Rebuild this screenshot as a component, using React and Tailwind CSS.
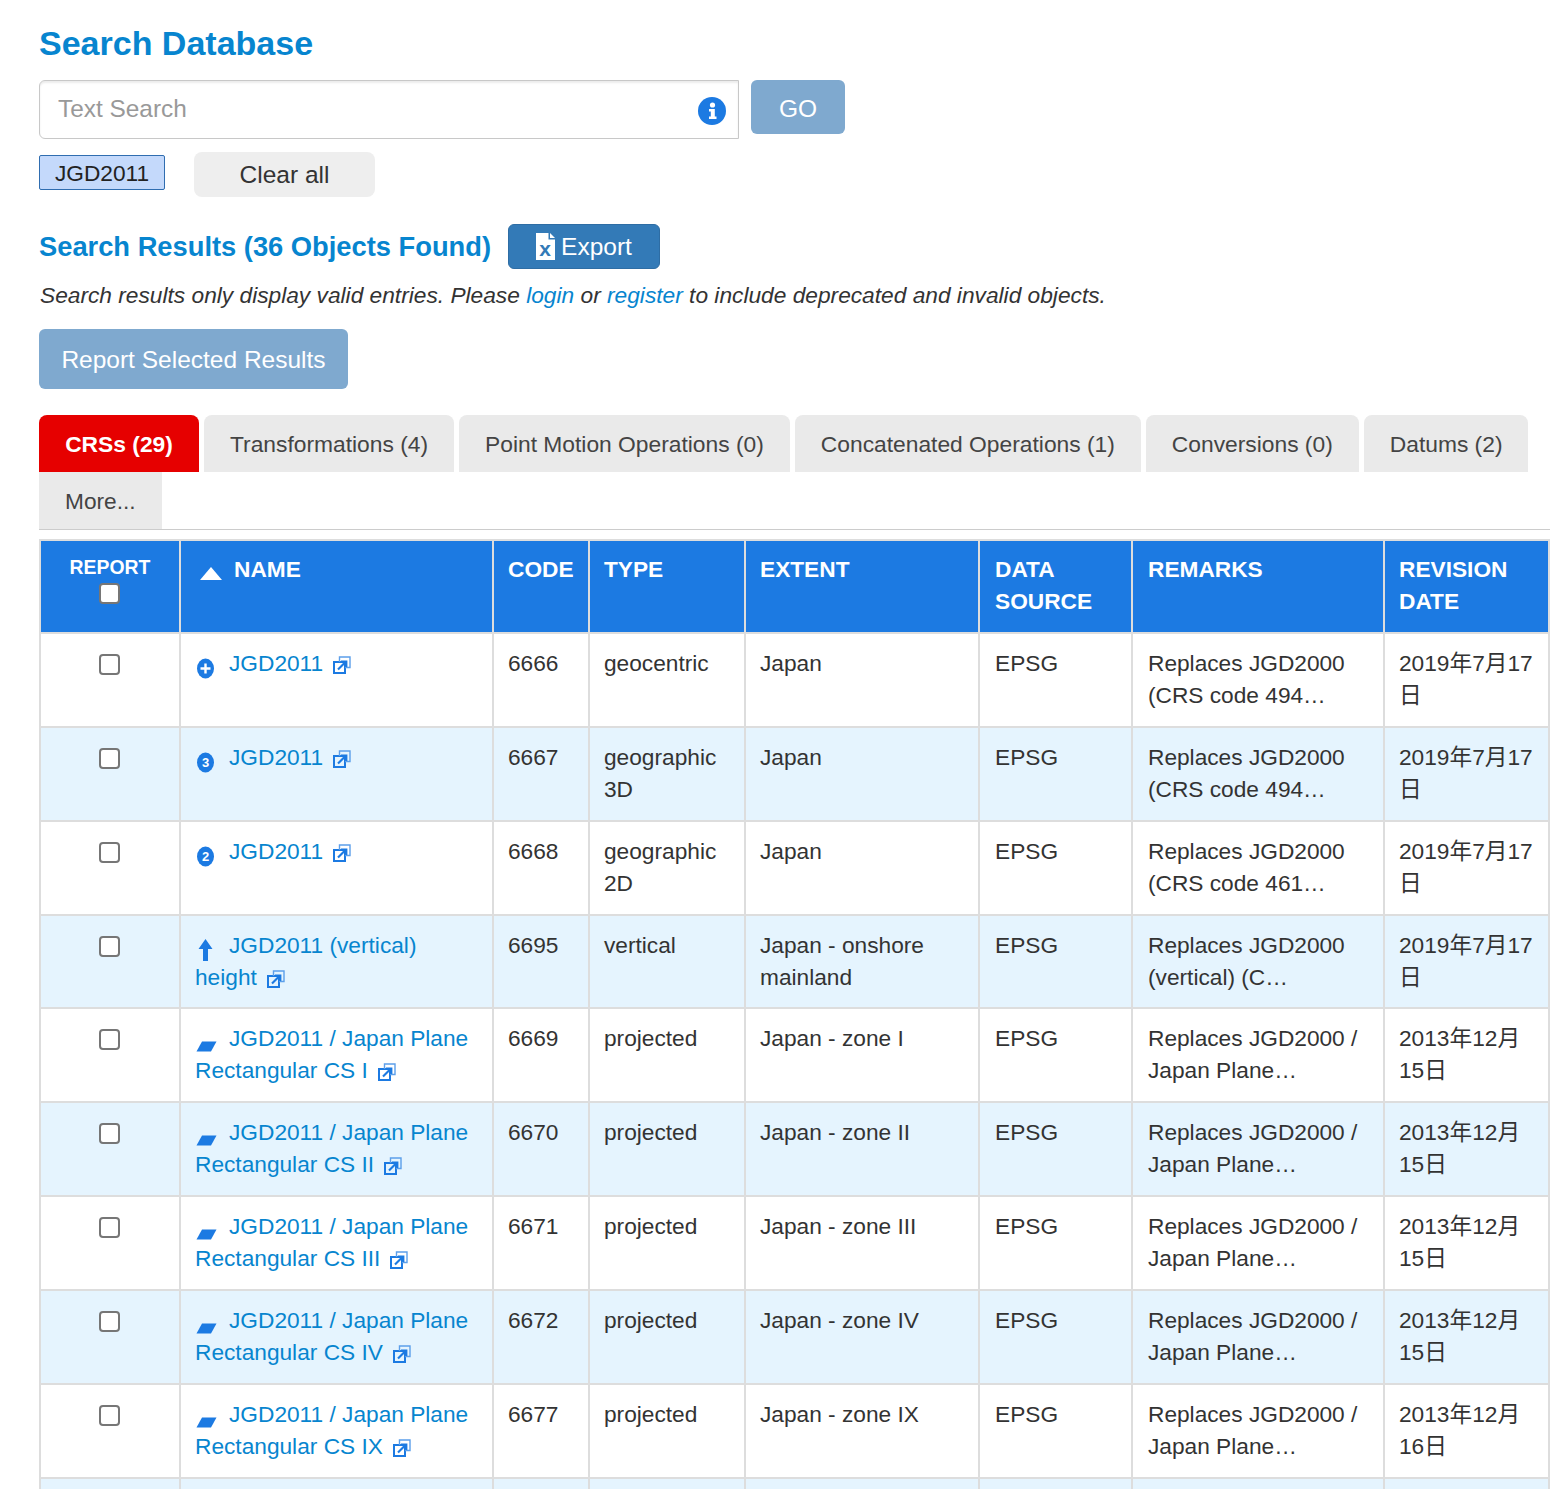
const Ext = () => (
  <svg viewBox="0 0 18 18" className="inline-block w-[18px] h-[18px] ml-[10px] align-[-3px]" fill="none" stroke="#1c7ae2">
    <rect x="1" y="6" width="11" height="11" strokeWidth="2" />
    <path d="M6.5 6 V1 H17 V11.5 H12" strokeWidth="1.4" stroke="#5c9fea" />
    <path d="M5 13.5 L11.5 7" strokeWidth="2.2" />
    <path d="M8 5.5 H13.5 V11" strokeWidth="1.8" />
  </svg>
);

const Badge = ({ t }) => (
  <svg viewBox="0 0 17 21" className="inline-block w-[17px] h-[21px] ml-[2px] mr-[15px] align-[-8px]">
    <ellipse cx="8.5" cy="10.5" rx="8.5" ry="10" fill="#1c7ae2" />
    {t === "+" ? (
      <path d="M8.5 5.5 V15.5 M3.5 10.5 H13.5" stroke="#fff" strokeWidth="2.4" />
    ) : (
      <text x="8.5" y="15" textAnchor="middle" fontSize="13" fontWeight="700" fill="#fff" fontFamily="Liberation Sans">{t}</text>
    )}
  </svg>
);

const Arrow = () => (
  <svg viewBox="0 0 17 22" className="inline-block w-[17px] h-[22px] ml-[2px] mr-[15px] align-[-8px]">
    <path d="M8.5 0 L15.5 10 H11 V22 H6 V10 H1.5 Z" fill="#1c7ae2" />
  </svg>
);

const Plane = () => (
  <svg viewBox="0 0 21 11" className="inline-block w-[21px] h-[11px] ml-px mr-3 align-[-6px]">
    <path d="M6 0.5 H20.5 L15 10.5 H0.5 Z" fill="#1c7ae2" />
  </svg>
);

const icons = {
  plus: <Badge t="+" />,
  three: <Badge t="3" />,
  two: <Badge t="2" />,
  arrow: <Arrow />,
  plane: <Plane />,
};

const d2019 = "2019年7月17日";
const rows = [
  ["plus", "JGD2011", "6666", "geocentric", "Japan", "Replaces JGD2000 (CRS code 494…", d2019],
  ["three", "JGD2011", "6667", "geographic 3D", "Japan", "Replaces JGD2000 (CRS code 494…", d2019],
  ["two", "JGD2011", "6668", "geographic 2D", "Japan", "Replaces JGD2000 (CRS code 461…", d2019],
  ["arrow", "JGD2011 (vertical) height", "6695", "vertical", "Japan - onshore mainland", "Replaces JGD2000 (vertical) (C…", d2019],
  ["plane", "JGD2011 / Japan Plane Rectangular CS I", "6669", "projected", "Japan - zone I", "Replaces JGD2000 / Japan Plane…", "2013年12月15日"],
  ["plane", "JGD2011 / Japan Plane Rectangular CS II", "6670", "projected", "Japan - zone II", "Replaces JGD2000 / Japan Plane…", "2013年12月15日"],
  ["plane", "JGD2011 / Japan Plane Rectangular CS III", "6671", "projected", "Japan - zone III", "Replaces JGD2000 / Japan Plane…", "2013年12月15日"],
  ["plane", "JGD2011 / Japan Plane Rectangular CS IV", "6672", "projected", "Japan - zone IV", "Replaces JGD2000 / Japan Plane…", "2013年12月15日"],
  ["plane", "JGD2011 / Japan Plane Rectangular CS IX", "6677", "projected", "Japan - zone IX", "Replaces JGD2000 / Japan Plane…", "2013年12月16日"],
];

const tabs = [
  "Transformations (4)",
  "Point Motion Operations (0)",
  "Concatenated Operations (1)",
  "Conversions (0)",
  "Datums (2)",
];

const check = "ml-[44px] block h-[21px] w-[21px] appearance-none rounded-[4px] border-2 border-[#767676] bg-white";
const th = "border-2 border-[#ddd] px-[14px] pt-[12px] pb-[15px] text-left align-top font-bold uppercase text-white";
const td = "border-2 border-[#ddd] px-[14px] pt-[13.1px] pb-[14.75px] align-top";

export default function App() {
  return (
    <div className="h-[1489px] overflow-hidden bg-white pl-[39px] pr-2 font-['Liberation_Sans','Noto_Sans_CJK_JP',sans-serif] text-[22.7px] leading-8 text-[#333]">
      <h1 className="pt-[23px] text-[34px] font-bold leading-10 text-[#0785cf]">Search Database</h1>

      <div className="mt-[17px] flex items-start gap-3">
        <div className="relative w-[700px]">
          <input
            placeholder="Text Search"
            className="h-[59px] w-full rounded-l-md border border-[#c8c8c8] bg-white px-[18px] pb-[2px] text-[24.4px] text-[#555] shadow-[inset_0_2px_2px_rgba(0,0,0,0.08)] outline-none placeholder:text-[#999]"
          />
          <svg viewBox="0 0 28 28" className="absolute right-[13px] top-[17px] h-7 w-7">
            <circle cx="14" cy="14" r="14" fill="#1c7ae2" />
            <circle cx="14.5" cy="8" r="2.6" fill="#fff" />
            <path d="M11 12 H16.8 V19.5 H18.5 V22 H11 V19.5 H12.8 V14.5 H11 Z" fill="#fff" />
          </svg>
        </div>
        <button className="h-[54px] w-[94px] rounded-md bg-[#7fa9cf] pt-[3px] text-[24.5px] text-white">GO</button>
      </div>

      <div className="mt-[13px] flex items-start">
        <span className="mt-[3px] flex h-[35px] w-[126px] items-center justify-center rounded-[2px] border border-[#2f6db0] bg-[#c4d9fb] text-[#222]">JGD2011</span>
        <button className="ml-[29px] h-[45px] w-[181px] rounded-lg bg-[#eee] text-[24.5px] text-[#333]">Clear all</button>
      </div>

      <div className="mt-[27px] flex items-center">
        <h2 className="w-[452px] whitespace-nowrap text-[27.3px] font-bold leading-10 text-[#0785cf]">Search Results (36 Objects Found)</h2>
        <button className="ml-[17px] flex h-[45px] w-[152px] items-center justify-center rounded-md border border-[#2e6da4] bg-[#337ab7] text-[24.5px] text-white">
          <svg viewBox="0 0 19 27" className="mr-[6px] h-[27px] w-[19px]">
            <path d="M0 0 H12.5 V6.5 H19 V27 H0 Z" fill="#fff" />
            <path d="M14 0 L19 5 H14 Z" fill="#fff" />
            <text x="9" y="23" textAnchor="middle" fontSize="21" fontWeight="700" fill="#337ab7" fontFamily="Liberation Sans">x</text>
          </svg>
          Export
        </button>
      </div>

      <p className="mt-[10px] pl-px text-[22.72px] italic">
        Search results only display valid entries. Please <a className="text-[#0785cf]">login</a> or{" "}
        <a className="text-[#0785cf]">register</a> to include deprecated and invalid objects.
      </p>

      <button className="mt-[18px] block h-[60px] w-[309px] rounded-md bg-[#7fa9cf] pt-px text-[24.5px] text-white">Report Selected Results</button>

      <div className="mt-[26px] border-b border-[#ccc]">
        <div className="flex flex-wrap gap-x-[5px] text-[22.8px]">
          <div className="flex h-[57px] w-[160px] items-center justify-center rounded-t-lg bg-[#e60000] pt-px font-bold text-white">CRSs (29)</div>
          {tabs.map((t) => (
            <div key={t} className="flex h-[57px] items-center rounded-t-lg bg-[#eaeaea] px-[26px] pt-px text-[#444]">{t}</div>
          ))}
          <div className="flex h-[57px] items-center bg-[#eaeaea] px-[26px] pt-px text-[22.7px] text-[#444]">More...</div>
        </div>
      </div>

      <table className="mt-[9px] w-[1509px] table-fixed border-collapse">
        <colgroup>
          <col className="w-[140px]" />
          <col className="w-[313px]" />
          <col className="w-[96px]" />
          <col className="w-[156px]" />
          <col className="w-[234px]" />
          <col className="w-[153px]" />
          <col className="w-[252px]" />
          <col className="w-[165px]" />
        </colgroup>
        <thead className="bg-[#1c7ae2]">
          <tr>
            <th className={th}>
              <div className="mt-px text-center text-[19.4px] leading-[26px]">Report</div>
              <input type="checkbox" className={check + " mt-[3px]"} />
            </th>
            <th className={th}>
              <svg viewBox="0 0 24 16" className="ml-[4px] mr-[11px] inline-block h-4 w-6 align-[-5px] blur-[0.5px]">
                <path d="M12 1 L23 14 H1 Z" fill="#fff" />
              </svg>
              Name
            </th>
            <th className={th}>Code</th>
            <th className={th}>Type</th>
            <th className={th}>Extent</th>
            <th className={th + " pl-[15px]"}>Data Source</th>
            <th className={th + " pl-[15px]"}>Remarks</th>
            <th className={th}>Revision Date</th>
          </tr>
        </thead>
        <tbody>
          {rows.map((r, i) => (
            <tr key={r[2]} className={i % 2 ? "bg-[#e5f4fe]" : "bg-white"}>
              <td className={td}>
                <input type="checkbox" className={check + " mt-[7px]"} />
              </td>
              <td className={td}>
                {icons[r[0]]}
                <a className="text-[#0785cf]">{r[1]}</a>
                <Ext />
              </td>
              <td className={td}>{r[2]}</td>
              <td className={td}>{r[3]}</td>
              <td className={td}>{r[4]}</td>
              <td className={td + " pl-[15px]"}>EPSG</td>
              <td className={td + " pl-[15px]"}>{r[5]}</td>
              <td className={td}>{r[6]}</td>
            </tr>
          ))}
          <tr className="bg-[#e5f4fe]">
            <td className={td}>&nbsp;</td>
            <td className={td}></td>
            <td className={td}></td>
            <td className={td}></td>
            <td className={td}></td>
            <td className={td}></td>
            <td className={td}></td>
            <td className={td}></td>
          </tr>
        </tbody>
      </table>
    </div>
  );
}
